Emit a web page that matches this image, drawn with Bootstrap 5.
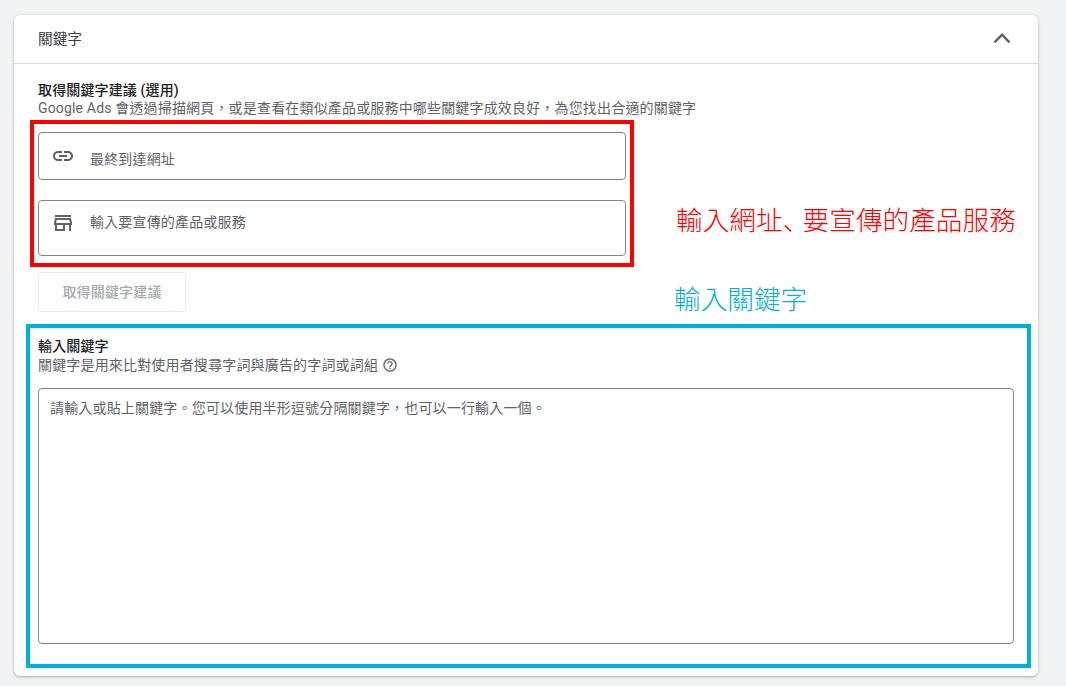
<!DOCTYPE html>
<html lang="zh-Hant">
<head>
<meta charset="utf-8">
<title>關鍵字</title>
<link href="https://cdn.jsdelivr.net/npm/bootstrap@5.3.0/dist/css/bootstrap.min.css" rel="stylesheet">
<style>
html,body{height:100%;overflow:hidden}
body{background:#f1f3f4;font-family:Roboto,"Noto Sans CJK TC",sans-serif;color:#3c4043;padding:15px 28px 0 14px}
.kw-panel{position:relative;height:661px;background:#fff;border-radius:6px;box-shadow:0 1px 3px rgba(60,64,67,.4)}
.kw-head{height:49px;padding:0 24px;border-bottom:1px solid #dadce0;font-size:14.67px;color:#3c4043}
.kw-head span{margin-top:-1px}
.kw-chev{width:30px;height:30px;margin-right:-3px;margin-top:-3px}
.kw-body{padding:16px 24px 0}
.kw-title{font-size:14px;letter-spacing:.14px;font-weight:500;line-height:20px;color:#202124}
.kw-sub{font-size:14px;letter-spacing:.17px;line-height:16px;color:#5f6368}
.kw-sec2 .kw-sub{margin-top:1px}
.kw-input{border:1px solid #80868b;border-radius:4px;width:588px;padding-left:12px;font-size:14px;letter-spacing:.17px;color:#5f6368}
.kw-i1{height:48px;margin-top:16px}
.kw-i1 span{padding-top:6px}
.kw-i2{height:56px;margin-top:20px;padding-bottom:12px}
.kw-input svg{width:24px;height:24px;margin-right:15px;fill:#5f6368;flex:none}
.kw-i2 svg{margin-top:2px}
.kw-btn{margin-top:16px;width:148px;height:40px;border:1px solid #e8eaed;border-radius:4px;background:#fff;font-size:14px;letter-spacing:.17px;font-weight:500;color:#a8abaf;padding:0;display:block}
.kw-btn:disabled{opacity:1;border-color:#e8eaed;color:#a8abaf;background:#fff}
.kw-sec2{margin-top:24px}
.kw-help{width:16px;height:16px;fill:#5f6368;margin-left:4px;vertical-align:-3px}
.kw-area{display:block;width:976px;height:256px;margin-top:15px;border:1px solid #80868b;border-radius:4px;padding:11px;font-size:14px;letter-spacing:.17px;line-height:16px;resize:none;outline:0;color:#3c4043}
.kw-area::placeholder{color:#5f6368;opacity:1}
.kw-box{position:absolute;pointer-events:none}
.kw-box-red{left:16px;top:105px;width:604px;height:147px;border:4px solid #f00}
.kw-box-cyan{left:12px;top:309px;width:1005px;height:344px;border:4px solid #00b0dc}
.kw-note{position:absolute;font-size:26.67px;line-height:32px;white-space:nowrap;font-family:"Noto Sans CJK TC",sans-serif;font-weight:300}
.kw-note-red{left:662px;top:188px;color:#f00}
.kw-note-cyan{left:660px;top:267px;color:#00b0dc}
.kw-comma{letter-spacing:-6.7px;font-family:"Noto Sans CJK SC",sans-serif}
</style>
</head>
<body>
<div class="kw-panel">
  <div class="kw-head d-flex align-items-center justify-content-between">
    <span>關鍵字</span>
    <svg class="kw-chev" viewBox="0 0 24 24" fill="#5f6368"><path d="M12 8l-6.7 6.7 1.4 1.4L12 10.8l5.3 5.3 1.4-1.4z"/></svg>
  </div>
  <div class="kw-body">
    <div class="kw-title">取得關鍵字建議 (選用)</div>
    <div class="kw-sub">Google Ads 會透過掃描網頁，或是查看在類似產品或服務中哪些關鍵字成效良好，為您找出合適的關鍵字</div>
    <div class="kw-input kw-i1 d-flex align-items-center">
      <svg viewBox="0 0 24 24"><path d="M3.9 12c0-1.71 1.39-3.1 3.1-3.1h4V7H7c-2.76 0-5 2.24-5 5s2.24 5 5 5h4v-1.9H7c-1.71 0-3.1-1.39-3.1-3.1zM8 13h8v-2H8v2zm9-6h-4v1.9h4c1.71 0 3.1 1.39 3.1 3.1s-1.39 3.1-3.1 3.1h-4V17h4c2.76 0 5-2.24 5-5s-2.24-5-5-5z"/></svg>
      <span>最終到達網址</span>
    </div>
    <div class="kw-input kw-i2 d-flex align-items-center">
      <svg viewBox="0 0 24 24"><path d="M18.36 9l.6 3H5.04l.6-3h12.72M20 4H4v2h16V4zm0 3H4l-1 5v2h1v6h10v-6h4v6h2v-6h1v-2l-1-5zM6 18v-4h6v4H6z"/></svg>
      <span>輸入要宣傳的產品或服務</span>
    </div>
    <button class="kw-btn btn" type="button" disabled>取得關鍵字建議</button>
    <div class="kw-sec2">
      <div class="kw-title">輸入關鍵字</div>
      <div class="kw-sub">關鍵字是用來比對使用者搜尋字詞與廣告的字詞或詞組<svg class="kw-help" viewBox="0 0 24 24"><path d="M11 18h2v-2h-2v2zm1-16C6.48 2 2 6.48 2 12s4.48 10 10 10 10-4.48 10-10S17.52 2 12 2zm0 18c-4.41 0-8-3.59-8-8s3.59-8 8-8 8 3.59 8 8-3.59 8-8 8zm0-14c-2.21 0-4 1.79-4 4h2c0-1.1.9-2 2-2s2 .9 2 2c0 2-3 1.75-3 5h2c0-2.25 3-2.5 3-5 0-2.21-1.79-4-4-4z"/></svg></div>
      <textarea class="kw-area" placeholder="請輸入或貼上關鍵字。您可以使用半形逗號分隔關鍵字，也可以一行輸入一個。"></textarea>
    </div>
  </div>
  <div class="kw-box kw-box-red"></div>
  <div class="kw-box kw-box-cyan"></div>
  <div class="kw-note kw-note-red">輸入網址<span class="kw-comma" lang="zh-Hans">、</span>要宣傳的產品服務</div>
  <div class="kw-note kw-note-cyan">輸入關鍵字</div>
</div>
<script src="https://cdn.jsdelivr.net/npm/bootstrap@5.3.0/dist/js/bootstrap.bundle.min.js"></script>
</body>
</html>
